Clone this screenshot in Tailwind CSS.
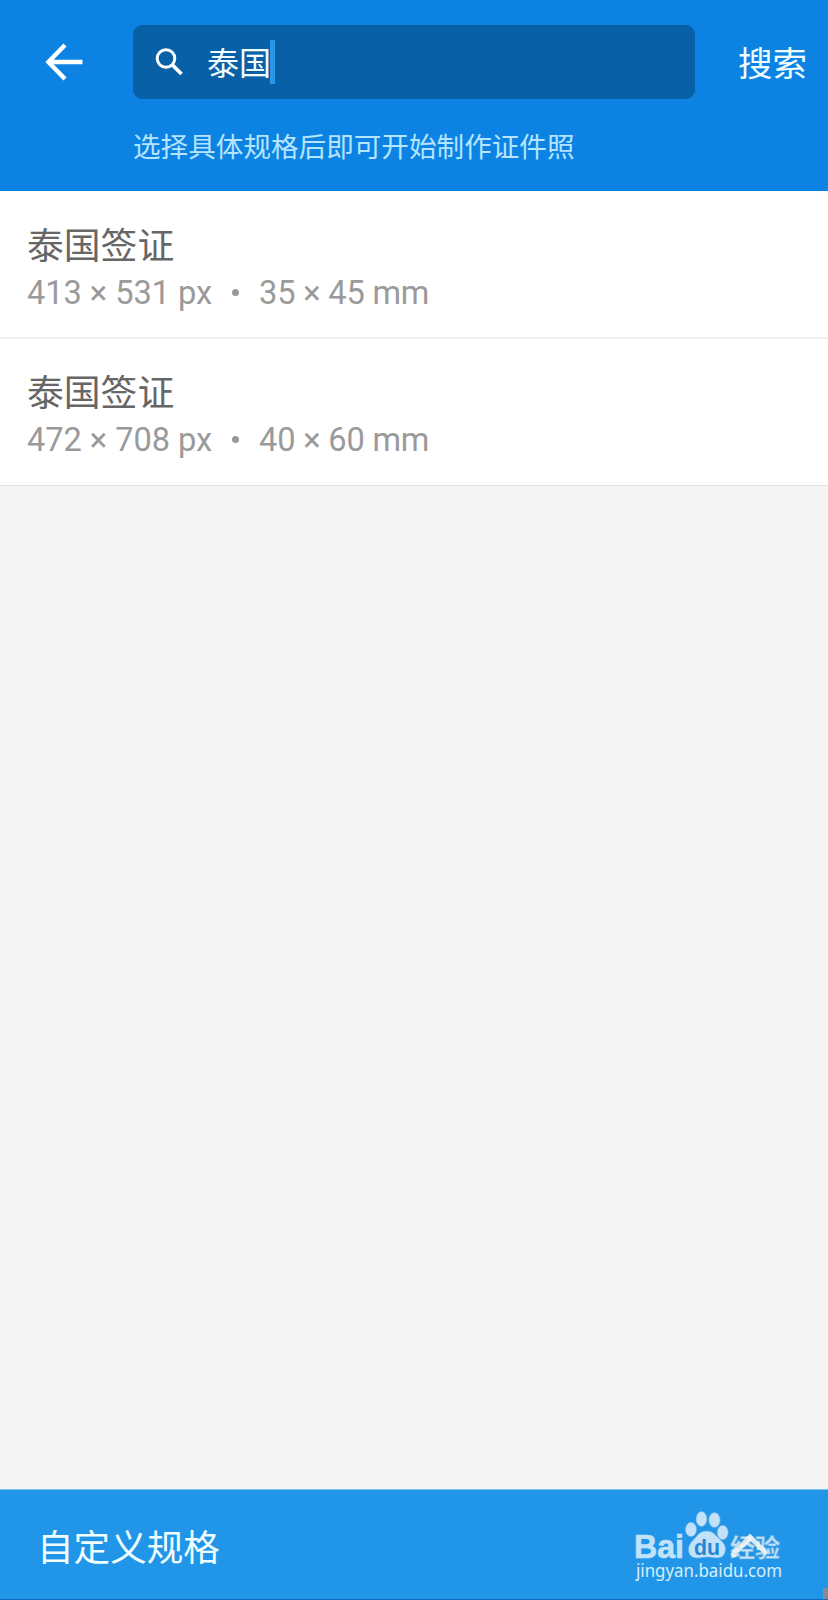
<!DOCTYPE html>
<html lang="zh-CN">
<head>
    <meta charset="UTF-8">
    <meta name="viewport" content="width=device-width, initial-scale=1.0">
    <title>证件照规格搜索</title>
    <script src="https://cdn.jsdelivr.net/npm/@tailwindcss/browser@4"></script>
    <style>
        body {
            font-family: Roboto, 'Noto Sans CJK SC', sans-serif;
        }
    </style>
</head>
<body class="bg-[#f4f4f4]">
    <div class="flex h-[1600px] w-[828px] flex-col overflow-hidden">
        <!-- Header -->
        <header class="h-[191px] shrink-0 bg-[#0c83e3] pt-[25px]">
            <div class="flex h-[74px] items-center">
                <button class="flex w-[133px] shrink-0 pl-[45px]">
                    <svg class="h-[38px] w-[38px]" viewBox="0 0 38 38" fill="none" stroke="#fff" stroke-width="4.4">
                        <path d="M37.5 19H4M20 2L3.4 19 20 36"/>
                    </svg>
                </button>
                <div class="flex h-[74px] w-[562px] shrink-0 items-center rounded-[9px] bg-[#0860a7] pl-[22px]">
                    <svg class="h-[28px] w-[28px]" viewBox="0 0 28 28" fill="none" stroke="#fff" stroke-width="3">
                        <circle cx="11" cy="10.5" r="8.8"/>
                        <path d="M17 16.5L26.5 26" stroke-width="3.8"/>
                    </svg>
                    <span class="ml-[24px] pt-[4px] text-[32px] leading-[44px] text-[#f0fdff]">泰国</span>
                    <span class="-ml-px h-[44px] w-[5px] bg-[#2b95e8]"></span>
                </div>
                <button class="ml-[43px] whitespace-nowrap pt-[4px] text-[34.5px] leading-[44px] text-[#f0fdff]">搜索</button>
            </div>
            <p class="ml-[133px] mt-[29px] text-[27.6px] leading-[40px] text-[#b5e4ff]">选择具体规格后即可开始制作证件照</p>
        </header>

        <!-- Results -->
        <ul class="shrink-0 bg-white">
            <li class="h-[148px] border-b-2 border-[#f2f2f2] pl-[27px] pt-[35px]">
                <h2 class="text-[36.8px] leading-[42px] text-[#666]">泰国签证</h2>
                <p class="flex items-center text-[32.6px] leading-[50px] text-[#9a9a9a]">
                    <span class="tracking-[-0.05px]">413 × 531 px</span>
                    <i class="ml-[20px] mr-[20px] mt-[-2px] h-[7px] w-[7px] rounded-full bg-[#999]"></i>
                    <span class="tracking-[-0.2px]">35 × 45 mm</span>
                </p>
            </li>
            <li class="h-[147px] border-b border-[#e2e2e2] pl-[27px] pt-[34px]">
                <h2 class="text-[36.8px] leading-[42px] text-[#666]">泰国签证</h2>
                <p class="flex items-center text-[32.6px] leading-[50px] text-[#9a9a9a]">
                    <span class="tracking-[-0.05px]">472 × 708 px</span>
                    <i class="ml-[20px] mr-[20px] mt-[-2px] h-[7px] w-[7px] rounded-full bg-[#999]"></i>
                    <span class="tracking-[-0.2px]">40 × 60 mm</span>
                </p>
            </li>
        </ul>

        <!-- Bottom bar -->
        <footer class="mt-auto flex h-[111px] shrink-0 items-center justify-between border-b border-t border-b-[#0c6cc0] border-t-[#7fc3ee] bg-[#2196e9] pl-[37px]">
            <span class="pt-[8px] text-[36.6px] leading-[48px] text-[#f0fdff]">自定义规格</span>
            <svg class="h-[109px] w-[228px]" viewBox="0 0 228 109">
                <g fill="#c2e2fa" stroke="#67ade0" stroke-width=".6">
                    <text x="34" y="67.500" font-family="Liberation Sans" font-size="34" font-weight="700" textLength="50" lengthAdjust="spacingAndGlyphs" stroke="#c2e2fa">Bai</text>
                    <ellipse cx="91" cy="39.5" rx="5.6" ry="7.2"/>
                    <ellipse cx="101.5" cy="29" rx="5.5" ry="7.4"/>
                    <ellipse cx="114.5" cy="30" rx="5.7" ry="7.4"/>
                    <ellipse cx="122.7" cy="42.5" rx="5.5" ry="7.2"/>
                    <path d="M106.500 41c-6 0-8 3-11 6.500s-7 6.500-7 12c0 6 4 8.500 9 8.500 4 0 6-1 10-1s6 1 9 1c5.500 0 9-3 9-9 0-5-4-8-7.500-11.500s-5.500-6.500-11.500-6.500z"/>
                    <text x="130" y="66.500" font-family="Noto Sans CJK SC" font-size="25" font-weight="700" textLength="50">经验</text>
                </g>
                <text x="94" y="64.500" fill="#2187d2" font-family="Liberation Sans" font-size="22" font-weight="700" textLength="26" lengthAdjust="spacingAndGlyphs">du</text>
                <path d="M132 66l18-19 17 17" fill="none" stroke="#f7f7f0" stroke-opacity=".85" stroke-width="5"/>
                <text x="36" y="87" fill="#d8eefc" font-family="Noto Sans" font-size="17.500" textLength="146" lengthAdjust="spacingAndGlyphs">jingyan.baidu.com</text>
                <path d="M223 98h5v11h-5z" fill="#858b8e"/>
            </svg>
        </footer>
    </div>
</body>
</html>
